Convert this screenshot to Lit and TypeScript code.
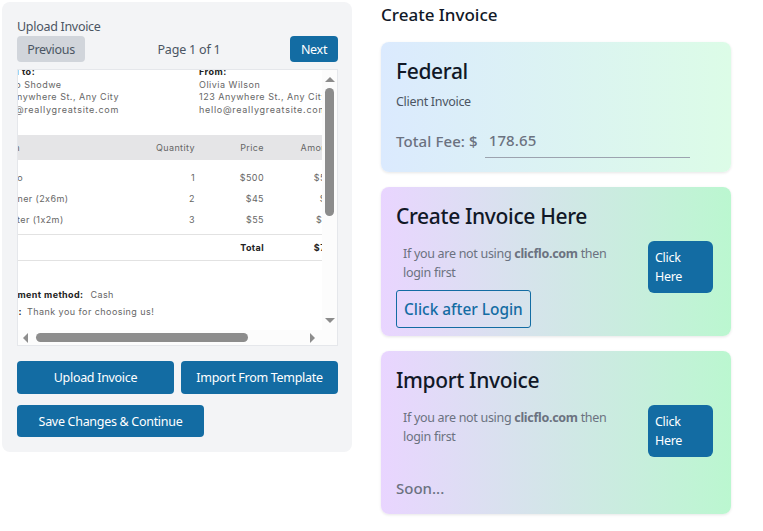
import { LitElement, css, html } from 'lit';
import { customElement } from 'lit/decorators.js';

@customElement('app-root')
export class AppRoot extends LitElement {
  static styles = css`
    :host {
      display: block;
      font-family: 'Noto Sans', 'Open Sans', sans-serif;
      color: #111827;
    }
    .page {
      display: flex;
      align-items: flex-start;
      gap: 29px;
      padding: 2px 0 0 2px;
    }
    .panel {
      width: 321px;
      height: 420px;
      padding: 15px 14px 15px 15px;
      background: #f3f4f6;
      border-radius: 8px;
      display: flex;
      flex-direction: column;
    }
    .label {
      font-size: 12.5px;
      line-height: 19px;
      letter-spacing: -0.3px;
      color: #4b5563;
    }
    .pager {
      display: flex;
      justify-content: space-between;
      align-items: center;
      height: 26px;
      margin-bottom: 7px;
    }
    .btn {
      border: 0;
      border-radius: 4px;
      background: #136ca3;
      color: #fff;
      font: inherit;
      font-size: 12.5px;
      letter-spacing: -0.3px;
      padding: 0;
      display: flex;
      align-items: center;
      justify-content: center;
    }
    .pager .btn { height: 26px; }
    .prev { width: 68px; background: #d1d5db; color: #4b5563; }
    .next { width: 48px; }
    .count { font-size: 12.5px; color: #4b5563; letter-spacing: -0.2px; margin-left: 3px; }

    .viewer {
      height: 275px;
      border: 1px solid #e5e7eb;
      background: #fff;
      display: grid;
      grid-template-columns: 304px 15px;
      grid-template-rows: 260px 15px;
    }
    .clip { overflow: hidden; }
    .doc {
      margin-left: -22px;
      width: 400px;
      font-family: Inter, 'Liberation Sans', sans-serif;
      font-size: 9px;
      color: #666;
      letter-spacing: 0.4px;
    }
    .addr {
      display: flex;
      margin-top: -4px;
      line-height: 12.5px;
      height: 69px;
      letter-spacing: 0.5px;
    }
    .addr > div { white-space: nowrap; box-sizing: border-box; }
    .addr > div:first-child { width: 198px; margin-left: 4px; margin-right: 1px; text-indent: -9px; }
    .addr > div:first-child b { margin-left: 13px; }
    .addr .mail { letter-spacing: 0.72px; }
    .addr b, .foot b, .total b { color: #222; font-weight: 700; }
    .row {
      display: grid;
      grid-template-columns: 117px 78px 69px 74px;
      height: 21px;
      align-items: center;
      padding-left: 4px;
      white-space: nowrap;
    }
    .row span:nth-child(n + 2) { text-align: right; }
    .head { height: 25px; background: #e5e5e7; margin-bottom: 7px; }
    .head span:last-child { padding-right: 2px; }
    .total {
      height: 25px;
      margin-top: 4px;
      border-top: 1px solid #e2e2e2;
      border-bottom: 1px solid #e2e2e2;
    }
    .foot { margin-top: 25px; line-height: 17px; padding-left: 4px; white-space: nowrap; }
    .foot .pay { margin-left: 4px; }
    .foot .note { margin-left: -4px; }
    .foot .note .pay { margin-left: 2px; letter-spacing: 0.45px; }

    .vbar, .hbar, .corner { background: #fcfcfc; }
    .vbar { display: flex; flex-direction: column; align-items: center; }
    .thumb-v { width: 9px; height: 128px; margin-top: 3px; border-radius: 5px; background: #8c8c8c; }
    .hbar { display: flex; align-items: center; }
    .thumb-h { width: 212px; height: 9px; margin-left: 5px; border-radius: 5px; background: #8c8c8c; }
    svg { display: block; fill: #8c8c8c; flex: none; }
    .vbar svg:first-child { margin-top: 5px; }
    .vbar svg:last-child { margin-top: auto; margin-bottom: 5px; }
    .hbar svg:first-child { margin-left: 3px; }
    .hbar svg:last-child { margin-left: auto; margin-right: 5px; }

    .actions { display: flex; gap: 7px; margin-top: 15px; }
    .actions .btn { flex: 1; height: 33px; }
    .save { width: 187px; height: 33px; margin-top: 11px; }

    .side { width: 350px; }
    .side h2 {
      margin: 0 0 14px;
      font-size: 17px;
      line-height: 26px;
      font-weight: 500;
      color: #111827;
    }
    .card {
      padding: 15px;
      border-radius: 8px;
      margin-bottom: 15px;
      box-sizing: border-box;
      box-shadow: 0 1px 3px rgba(0, 0, 0, 0.1);
      background: linear-gradient(to right, #e9d5ff, #bbf7d0);
    }
    .card.soft { background: linear-gradient(to right, #dbeafe, #dcfce7); height: 130px; }
    .card.mid { height: 149px; }
    .card.tall { height: 163px; }
    .card h3 {
      margin: 0;
      font-size: 21px;
      line-height: 29px;
      font-weight: 500;
      letter-spacing: -0.35px;
    }
    .sub { margin: 6px 0 0; font-size: 12.5px; line-height: 20px; letter-spacing: -0.3px; color: #4b5563; }
    .fee { display: flex; align-items: flex-end; margin-top: 17px; color: #6b7280; font-size: 15px; font-weight: 500; letter-spacing: 0.1px; }
    .fee > span:first-child { line-height: 24px; margin-bottom: 5px; }
    .fee .value {
      width: 201px;
      margin-left: 7px;
      padding: 0 0 6px 4px;
      border-bottom: 1px solid #9ca3af;
      line-height: 22px;
    }
    .info { display: flex; justify-content: space-between; margin-top: 10px; }
    .info p {
      margin: 3px 0 0 7px;
      width: 215px;
      font-size: 12.5px;
      line-height: 19px;
      letter-spacing: -0.3px;
      color: #6b7280;
    }
    .info b { color: #6b7280; }
    .card .click {
      width: 65px;
      height: 52px;
      margin-right: 3px;
      border-radius: 6px;
      justify-content: flex-start;
      text-align: left;
      padding: 0 20px 0 7px;
      box-sizing: border-box;
      line-height: 19px;
    }
    .login {
      display: block;
      width: fit-content;
      box-sizing: border-box;
      margin-top: -3px;
      padding: 0 7px;
      height: 38px;
      line-height: 38px;
      border: 1px solid #136ca3;
      border-radius: 3px;
      color: #136ca3;
      font-size: 15.4px;
      font-weight: 500;
    }
    .soon { margin-top: 21px; line-height: 20px; color: #6b7280; font-size: 15px; font-weight: 500; }
  `;

  private card(title: string) {
    return html`
      <h3>${title}</h3>
      <div class="info">
        <p>If you are not using <b>clicflo.com</b> then login first</p>
        <button class="btn click">Click Here</button>
      </div>
    `;
  }

  private tri(points: string) {
    return html`<svg width="10" height="10" viewBox="0 0 10 10"><polygon points=${points}></polygon></svg>`;
  }

  render() {
    return html`
      <div class="page">
        <div class="panel">
          <div class="label">Upload Invoice</div>
          <div class="pager">
            <button class="btn prev">Previous</button>
            <span class="count">Page 1 of 1</span>
            <button class="btn next">Next</button>
          </div>
          <div class="viewer">
            <div class="clip">
              <div class="doc">
                <div class="addr">
                  <div>
                    <div><b>Bill to:</b></div>
                    <div>Studio Shodwe</div>
                    <div>123 Anywhere St., Any City</div>
                    <div class="mail">hello@reallygreatsite.com</div>
                  </div>
                  <div>
                    <div><b>From:</b></div>
                    <div>Olivia Wilson</div>
                    <div>123 Anywhere St., Any City</div>
                    <div class="mail">hello@reallygreatsite.com</div>
                  </div>
                </div>
                <div class="row head"><span>Item</span><span>Quantity</span><span>Price</span><span>Amount</span></div>
                <div class="row"><span>Logo</span><span>1</span><span>$500</span><span>$500</span></div>
                <div class="row"><span>Banner (2x6m)</span><span>2</span><span>$45</span><span>$90</span></div>
                <div class="row"><span>Poster (1x2m)</span><span>3</span><span>$55</span><span>$165</span></div>
                <div class="row total"><span></span><span></span><span><b>Total</b></span><span><b>$755</b></span></div>
                <div class="foot">
                  <div><b>Payment method:</b> <span class="pay">Cash</span></div>
                  <div class="note"><b>Note:</b> <span class="pay">Thank you for choosing us!</span></div>
                </div>
              </div>
            </div>
            <div class="vbar">
              ${this.tri('0,7 5,2 10,7')}
              <div class="thumb-v"></div>
              ${this.tri('0,3 10,3 5,8')}
            </div>
            <div class="hbar">
              ${this.tri('7,0 7,10 2,5')}
              <div class="thumb-h"></div>
              ${this.tri('3,0 8,5 3,10')}
            </div>
            <div class="corner"></div>
          </div>
          <div class="actions">
            <button class="btn">Upload Invoice</button>
            <button class="btn">Import From Template</button>
          </div>
          <button class="btn save">Save Changes &amp; Continue</button>
        </div>
        <div class="side">
          <h2>Create Invoice</h2>
          <div class="card soft">
            <h3>Federal</h3>
            <p class="sub">Client Invoice</p>
            <div class="fee"><span>Total Fee: $</span><span class="value">178.65</span></div>
          </div>
          <div class="card mid">
            ${this.card('Create Invoice Here')}
            <span class="login">Click after Login</span>
          </div>
          <div class="card tall">
            ${this.card('Import Invoice')}
            <div class="soon">Soon...</div>
          </div>
        </div>
      </div>
    `;
  }
}
